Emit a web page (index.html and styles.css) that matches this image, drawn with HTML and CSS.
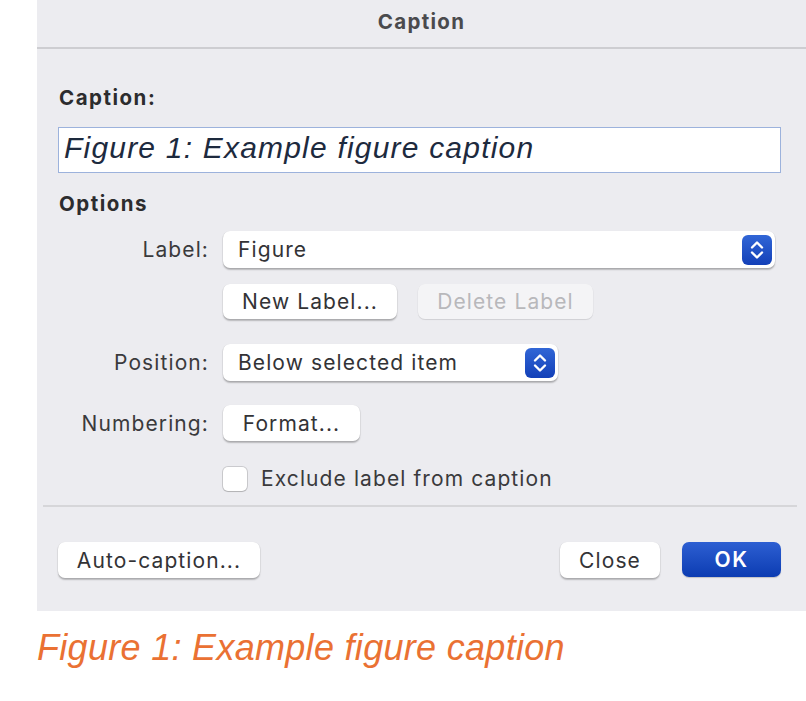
FILE: index.html
```html
<!DOCTYPE html>
<html>
<head>
<meta charset="utf-8">
<link rel="stylesheet" href="styles.css">
</head>
<body>
<div class="dialog">
  <div class="titlebar">Caption</div>
  <div class="content">
    <div class="heading caption-heading">Caption:</div>
    <div class="textfield">Figure 1: Example figure caption</div>
    <div class="heading options-heading">Options</div>

    <div class="row row-label">
      <div class="lbl">Label:</div>
      <div class="popup popup-wide">
        <span>Figure</span>
        <span class="stepper"><svg viewBox="0 0 30 30" width="30" height="30"><path d="M10 12.5 L15 7.5 L20 12.5" fill="none" stroke="#fff" stroke-width="2.4" stroke-linecap="round" stroke-linejoin="round"/><path d="M10 17.5 L15 22.5 L20 17.5" fill="none" stroke="#fff" stroke-width="2.4" stroke-linecap="round" stroke-linejoin="round"/></svg></span>
      </div>
    </div>

    <div class="row row-buttons">
      <div class="lbl"></div>
      <div class="btngroup">
        <div class="btn btn-newlabel">New Label...</div>
        <div class="btn btn-disabled">Delete Label</div>
      </div>
    </div>

    <div class="row row-position">
      <div class="lbl">Position:</div>
      <div class="popup popup-pos">
        <span>Below selected item</span>
        <span class="stepper"><svg viewBox="0 0 30 30" width="30" height="30"><path d="M10 12.5 L15 7.5 L20 12.5" fill="none" stroke="#fff" stroke-width="2.4" stroke-linecap="round" stroke-linejoin="round"/><path d="M10 17.5 L15 22.5 L20 17.5" fill="none" stroke="#fff" stroke-width="2.4" stroke-linecap="round" stroke-linejoin="round"/></svg></span>
      </div>
    </div>

    <div class="row row-numbering">
      <div class="lbl">Numbering:</div>
      <div class="btn btn-format">Format...</div>
    </div>

    <div class="row row-check">
      <div class="lbl"></div>
      <div class="check">
        <span class="box"></span>
        <span class="check-text">Exclude label from caption</span>
      </div>
    </div>
  </div>
  <div class="separator"></div>
  <div class="footer">
    <div class="btn btn-auto">Auto-caption...</div>
    <div class="footer-right">
      <div class="btn btn-close">Close</div>
      <div class="btn btn-ok">OK</div>
    </div>
  </div>
</div>
<div class="figcaption">Figure 1: Example figure caption</div>
</body>
</html>
```

FILE: styles.css
```css
html, body {
  margin: 0;
  padding: 0;
  background: #ffffff;
}
body {
  font-family: Inter, "Liberation Sans", sans-serif;
  color: #333336;
}
.dialog {
  margin-left: 37px;
  width: 769px;
  height: 611px;
  background: #ececf0;
  display: flex;
  flex-direction: column;
}
.titlebar {
  height: 47px;
  border-bottom: 2px solid #cdcdd1;
  text-align: center;
  font-weight: 700;
  font-size: 20.5px;
  letter-spacing: 1.3px;
  line-height: 44px;
  color: #4a4a4d;
}
.content {
  padding: 38px 25px 0 22px;
}
.heading {
  font-weight: 700;
  font-size: 20.5px;
  letter-spacing: 1.5px;
  line-height: 22px;
  color: #2c2c2e;
}
.textfield {
  margin-top: 18px;
  margin-left: -1px;
  height: 44px;
  background: #fff;
  border: 1px solid #9cb2dc;
  box-sizing: content-box;
  font-family: "Liberation Sans", Arial, sans-serif;
  font-style: italic;
  font-size: 30px;
  letter-spacing: 1.2px;
  line-height: 40px;
  padding-left: 5px;
  color: #1d2a3e;
  width: 716px;
}
.options-heading {
  margin-top: 20px;
}
.row {
  display: flex;
  align-items: center;
}
.lbl {
  width: 150px;
  margin-right: 14px;
  text-align: right;
  font-size: 21px;
  letter-spacing: 1.1px;
  color: #3a3a3c;
  flex: none;
}
.row-label { margin-top: 16px; }
.row-buttons { margin-top: 16px; }
.row-position { margin-top: 25px; }
.row-numbering { margin-top: 24px; }
.row-check { margin-top: 25px; }

.popup {
  height: 37px;
  background: #fff;
  border-radius: 7px;
  box-shadow: 0 0.5px 0 0.5px rgba(0,0,0,0.08), 0 1.5px 1.5px rgba(0,0,0,0.22);
  display: flex;
  align-items: center;
  justify-content: space-between;
  padding: 0 3px 0 15px;
  box-sizing: border-box;
  font-size: 21px;
  letter-spacing: 1.1px;
  color: #333336;
}
.popup-wide { width: 552px; }
.popup-pos { width: 335px; }
.stepper {
  width: 30px;
  height: 30px;
  border-radius: 6px;
  background: linear-gradient(#3166d6, #1340b8);
  display: flex;
}
.btngroup {
  display: flex;
  gap: 21px;
}
.btn {
  height: 35px;
  background: #fff;
  border-radius: 7px;
  box-shadow: 0 0.5px 0 0.5px rgba(0,0,0,0.07), 0 1.5px 1.5px rgba(0,0,0,0.22);
  display: flex;
  align-items: center;
  justify-content: center;
  font-size: 21px;
  letter-spacing: 1.1px;
  color: #333336;
  box-sizing: border-box;
}
.btn-newlabel { width: 174px; }
.btn-disabled {
  width: 175px;
  background: #f4f4f6;
  color: #b8b8bb;
  box-shadow: 0 0.5px 0 0.5px rgba(0,0,0,0.04), 0 1px 1px rgba(0,0,0,0.08);
}
.btn-format { width: 137px; height: 36px; }
.check {
  display: flex;
  align-items: center;
}
.box {
  width: 24px;
  height: 24px;
  background: #fff;
  border-radius: 5px;
  box-shadow: 0 0 0 1px rgba(0,0,0,0.14), 0 1px 1px rgba(0,0,0,0.12);
  margin-right: 14px;
}
.check-text {
  font-size: 21px;
  letter-spacing: 1.1px;
  color: #3a3a3c;
}
.separator {
  margin: 14px 9px 0 6px;
  height: 2px;
  background: #d6d6d9;
}
.footer {
  margin-top: 35px;
  padding: 0 25px 0 21px;
  display: flex;
  justify-content: space-between;
}
.btn-auto { width: 202px; height: 36px; }
.footer-right {
  display: flex;
  gap: 22px;
}
.btn-close { width: 100px; height: 36px; }
.btn-ok {
  width: 99px;
  height: 35px;
  background: linear-gradient(#2d5fd2, #0c3cb2);
  color: #fff;
  font-weight: 600;
  letter-spacing: 1.5px;
  box-shadow: 0 1px 1px rgba(0,0,0,0.18);
}
.figcaption {
  margin-left: 37px;
  margin-top: 15px;
  font-family: "Liberation Sans", Arial, sans-serif;
  font-style: italic;
  font-size: 36px;
  letter-spacing: 0.3px;
  line-height: 44px;
  color: #ea7133;
}
```
